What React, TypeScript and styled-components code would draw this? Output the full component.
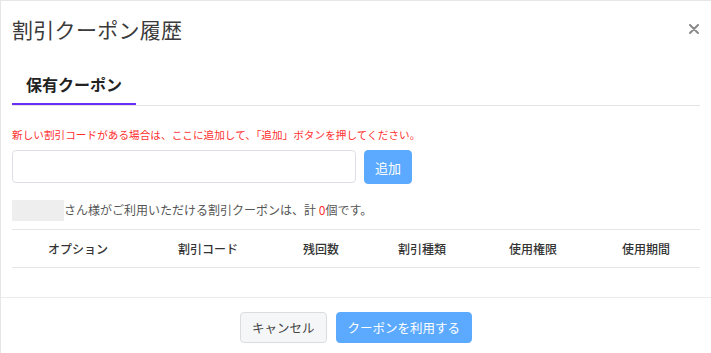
import React from 'react';
import styled, { createGlobalStyle } from 'styled-components';

/**
 * Global styles.
 */

const GlobalStyle = createGlobalStyle`
  html, body {
    background: #ffffff;
    margin: 0;
  }

  body {
    color: #333333;
    font-family: 'Noto Sans CJK JP', 'Noto Sans', sans-serif;
  }
`;

/**
 * `Modal` styled component.
 */

const Modal = styled.div`
  background: #ffffff;
  border-left: 1px solid #e6e6e6;
  border-top: 1px solid #e6e6e6;
  box-sizing: border-box;
  min-height: 353px;
  width: 711px;
`;

/**
 * `Header` styled component.
 */

const Header = styled.header`
  align-items: center;
  display: flex;
  justify-content: space-between;
  padding: 13px 12px 0 11px;
`;

const Title = styled.h2`
  color: #3a3a3a;
  font-size: 21px;
  font-weight: 400;
  letter-spacing: 0.3px;
  line-height: 30px;
  margin: 0;
`;

const CloseButton = styled.button`
  align-items: center;
  appearance: none;
  background: none;
  border: none;
  color: #8a8a8a;
  cursor: pointer;
  display: flex;
  padding: 0;
`;

/**
 * `Body` styled component.
 */

const Body = styled.div`
  padding: 21px 11px 29px;
`;

const Tabs = styled.div`
  border-bottom: 1px solid #e4e4e4;
  display: flex;
`;

const Tab = styled.div<{ active?: boolean }>`
  border-bottom: 2px solid ${({ active }) => (active ? '#6b2ef5' : 'transparent')};
  box-sizing: border-box;
  color: #222222;
  font-size: 16px;
  font-weight: 700;
  height: 40px;
  line-height: 38px;
  padding: 0 14px;
  width: 124px;
`;

const Notice = styled.p`
  color: #ff3030;
  font-size: 10.6px;
  letter-spacing: 0.05px;
  line-height: 16px;
  margin: 21px 0 0;
`;

const InputRow = styled.div`
  align-items: flex-start;
  display: flex;
  gap: 8px;
  margin-top: 7px;
`;

const CodeInput = styled.input`
  border: 1px solid #dcdfe6;
  border-radius: 4px;
  box-sizing: border-box;
  height: 33px;
  outline: none;
  padding: 0 10px;
  width: 344px;
`;

const Button = styled.button<{ variant?: 'primary' | 'default' }>`
  background: ${({ variant }) => (variant === 'primary' ? '#5caaff' : '#f5f6f7')};
  border: 1px solid ${({ variant }) => (variant === 'primary' ? '#5caaff' : '#dcdcdc')};
  border-radius: 4px;
  box-sizing: border-box;
  color: ${({ variant }) => (variant === 'primary' ? '#ffffff' : '#444444')};
  cursor: pointer;
  font-family: inherit;
  font-size: 12.5px;
  padding: 0 11px;
`;

const AddButton = styled(Button)`
  font-size: 13px;
  height: 34px;
  width: 48px;
  padding: 0;
`;

const CountLine = styled.div`
  align-items: center;
  color: #555555;
  display: flex;
  font-size: 12px;
  line-height: 22px;
  margin-top: 15px;
`;

const NamePlaceholder = styled.span`
  background: #eeeeee;
  display: inline-block;
  height: 21px;
  width: 52px;
`;

const Red = styled.span`
  color: #ff3030;
`;

/**
 * `Table` styled components.
 */

const TableHead = styled.div`
  border-bottom: 1px solid #e6e6e6;
  border-top: 1px solid #e6e6e6;
  display: grid;
  grid-template-columns: 132px 128px 98px 104px 118px 108px;
  margin-top: 8px;
`;

const HeadCell = styled.div`
  color: #333333;
  font-size: 12px;
  font-weight: 500;
  line-height: 37px;
  text-align: center;
`;

/**
 * `Footer` styled component.
 */

const Footer = styled.footer`
  border-top: 1px solid #ebebeb;
  display: flex;
  gap: 9px;
  justify-content: center;
  padding: 14px 0 10px;

  ${Button} {
    height: 31px;
  }
`;

const columns = ['オプション', '割引コード', '残回数', '割引種類', '使用権限', '使用期間'];

export default function App() {
  return (
    <>
      <GlobalStyle />
      <Modal>
        <Header>
          <Title>{'割引クーポン履歴'}</Title>
          <CloseButton aria-label={'閉じる'}>
            <svg width={'10'} height={'10'} viewBox={'0 0 10 10'}>
              <path
                d={'M1 1L9 9M9 1L1 9'}
                stroke={'currentColor'}
                strokeWidth={'2'}
                strokeLinecap={'round'}
              />
            </svg>
          </CloseButton>
        </Header>

        <Body>
          <Tabs>
            <Tab active>{'保有クーポン'}</Tab>
          </Tabs>

          <Notice>
            {'新しい割引コードがある場合は、ここに追加して、「追加」ボタンを押してください。'}
          </Notice>

          <InputRow>
            <CodeInput />
            <AddButton variant={'primary'}>{'追加'}</AddButton>
          </InputRow>

          <CountLine>
            <NamePlaceholder />
            <span>
              {'さん様がご利用いただける割引クーポンは、計 '}
              <Red>{'0'}</Red>
              {'個です。'}
            </span>
          </CountLine>

          <TableHead>
            {columns.map(label => (
              <HeadCell key={label}>{label}</HeadCell>
            ))}
          </TableHead>
        </Body>

        <Footer>
          <Button>{'キャンセル'}</Button>
          <Button variant={'primary'}>{'クーポンを利用する'}</Button>
        </Footer>
      </Modal>
    </>
  );
}
